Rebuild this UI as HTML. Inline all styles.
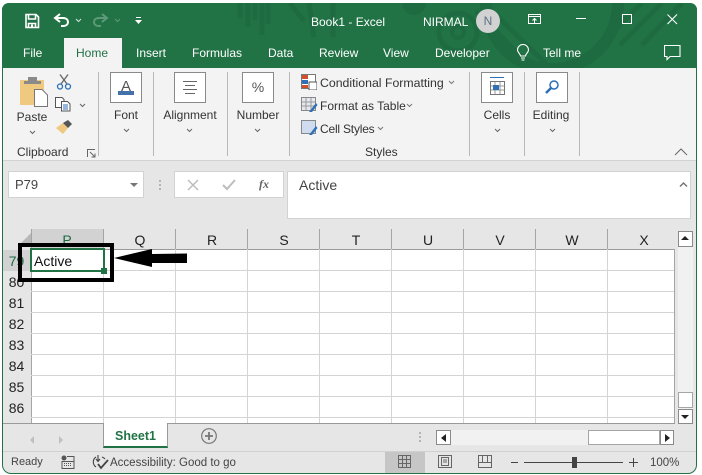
<!DOCTYPE html>
<html><head><meta charset="utf-8"><style>
*{box-sizing:border-box}
html,body{margin:0;padding:0;background:#fff}
body{width:702px;height:475px;position:relative;overflow:hidden;font-family:"Liberation Sans",sans-serif;font-size:12px;color:#333}
.a{position:absolute}
.t{position:absolute;white-space:nowrap;line-height:14px}
.w{color:#fff}
.c{text-align:center}
.box{position:absolute;background:#fff;border:1px solid #8a8a8a;width:32px;height:31px;top:72px}
.sep{position:absolute;top:72px;height:84px;width:1px;background:#b8b8b8}
.hl{position:absolute;left:31px;width:643px;height:1px;background:#d4d4d4}
.vl{position:absolute;top:249px;width:1px;height:174px;background:#d4d4d4}
.ch{position:absolute;top:233px;width:72px;text-align:center;font-size:14px;line-height:15px;color:#222}
.cs{position:absolute;top:229px;width:1px;height:20px;background:#a5a5a5}
.rh{position:absolute;left:3px;width:27px;text-align:center;font-size:14px;line-height:16px;color:#222}
.car{position:absolute}
</style></head><body>

<!-- window -->
<div class="a" style="left:2px;top:3px;width:695px;height:471px;background:#e6e6e6;border:1px solid #217346;border-top:0;border-radius:7px 7px 9px 9px;overflow:hidden"></div>
<div class="a" style="left:2px;top:3px;width:695px;height:65px;background:#217346;border-radius:7px 7px 0 0;overflow:hidden">
<svg width="695" height="65" style="position:absolute;left:0;top:0" fill="none">
<g stroke-width="5" stroke="#1e6b41">
<path d="M238 0V15M246 0V24M253 0V17M260 0V32M266 0V21"/>
<path d="M288 0L302 18M307 0L312 34M331 0V34"/>
<circle cx="456" cy="29" r="19" stroke-width="5"/>
<circle cx="456" cy="29" r="6" stroke-width="4"/>
<path d="M474 8L530 65M486 4L548 65"/>
<circle cx="550" cy="0" r="66" stroke-width="12"/>
<path d="M640 0L600 40M660 0L618 42M680 0L640 42"/>
</g>
<circle cx="412" cy="0" r="12" fill="#1e6b41" stroke="none"/>
</svg>
</div>

<!-- QAT -->
<svg class="a" style="left:24px;top:13px" width="16" height="16" viewBox="0 0 16 16" fill="none" stroke="#fff" stroke-width="1.6"><path d="M2 1.5H12L14.5 4V14.5H2Z"/><path d="M4.5 1.5V6H11.5V1.5M4.5 14.5V10.5H11.5V14.5"/><rect x="7" y="11.5" width="2" height="3" fill="#fff" stroke="none"/></svg>
<svg class="a" style="left:53px;top:13px" width="17" height="15" viewBox="0 0 17 15" fill="none" stroke="#fff" stroke-width="2"><path d="M7 1L2 5L7 9"/><path d="M2.5 5H10C13.5 5 15 7 15 9S13.5 13 10 13H8"/></svg>
<svg class="a" style="left:75px;top:18px" width="7" height="5" fill="none" stroke="#d5e6dc"><path d="M1 1L3.5 3.5L6 1"/></svg>
<svg class="a" style="left:92px;top:13px" width="17" height="15" viewBox="0 0 17 15" fill="none" stroke="#5c9a79" stroke-width="2"><path d="M10 1L15 5L10 9"/><path d="M14.5 5H7C3.5 5 2 7 2 9S3.5 13 7 13H9"/></svg>
<svg class="a" style="left:114px;top:18px" width="7" height="5" fill="none" stroke="#5c9a79"><path d="M1 1L3.5 3.5L6 1"/></svg>
<svg class="a" style="left:135px;top:17px" width="8" height="8" fill="#fff"><rect x="1" y="0" width="5" height="1"/><path d="M0 3H7L3.5 7Z"/></svg>

<div class="t w" style="left:311px;top:15px;font-size:12px">Book1&nbsp;-&nbsp;Excel</div>
<div class="t w" style="left:423px;top:15px;font-size:12px">NIRMAL</div>
<div class="a c" style="left:476px;top:9px;width:24px;height:24px;border-radius:50%;background:#d2d2d2;color:#5b6f86;font-size:12px;line-height:24px">N</div>
<svg class="a" style="left:528px;top:14px" width="14" height="11" fill="none" stroke="#fff"><rect x=".5" y=".5" width="12" height="9"/><path d="M0 2.5H13M6.5 9V4.5M4.5 6.5L6.5 4.5L8.5 6.5"/></svg>
<div class="a" style="left:576px;top:18px;width:10px;height:1px;background:#fff"></div>
<div class="a" style="left:622px;top:14px;width:10px;height:10px;border:1px solid #fff"></div>
<svg class="a" style="left:667px;top:14px" width="11" height="11" stroke="#fff" stroke-width="1.1"><path d="M.5 .5L10 10M10 .5L.5 10"/></svg>

<!-- tabs -->
<div class="a" style="left:64px;top:38px;width:58px;height:31px;background:#f3f3f3"></div>
<div class="t w" style="left:23px;top:46px">File</div>
<div class="t" style="left:76px;top:46px;color:#217346">Home</div>
<div class="t w" style="left:136px;top:46px">Insert</div>
<div class="t w" style="left:192px;top:46px">Formulas</div>
<div class="t w" style="left:268px;top:46px">Data</div>
<div class="t w" style="left:319px;top:46px">Review</div>
<div class="t w" style="left:383px;top:46px">View</div>
<div class="t w" style="left:435px;top:46px">Developer</div>
<svg class="a" style="left:516px;top:44px" width="14" height="18" fill="none" stroke="#fff" stroke-width="1.1"><path d="M4.5 12C4 9 1.500 8.500 1.500 6A5.500 5.500 0 0 1 12.500 6C12.500 8.500 10 9 9.500 12ZM5 14H9M5.500 16H8.500"/></svg>
<div class="t w" style="left:543px;top:46px">Tell me</div>
<svg class="a" style="left:664px;top:45px" width="17" height="16" fill="none" stroke="#fff" stroke-width="1.1"><path d="M.5 .5H16V11.500H6L3 14.500V11.500H.5Z"/></svg>

<!-- ribbon -->
<div class="a" style="left:3px;top:68px;width:693px;height:93px;background:#f3f3f3;border-bottom:1px solid #d2d2d2"></div>
<div class="sep" style="left:98px"></div><div class="sep" style="left:153px"></div><div class="sep" style="left:227px"></div><div class="sep" style="left:289px"></div><div class="sep" style="left:469px"></div><div class="sep" style="left:524px"></div><div class="sep" style="left:579px"></div>

<!-- paste -->
<svg class="a" style="left:19px;top:75px" width="30" height="32"><rect x="1" y="5" width="24" height="25" fill="#eec97f"/><rect x="9" y="2" width="9" height="6" fill="#8a8a8a"/><rect x="5" y="6" width="17" height="3" fill="#8a8a8a"/><path d="M15.500 14.500H23L28.500 20V31.500H15.500Z" fill="#fff" stroke="#777"/></svg>
<div class="t c" style="left:12px;top:110px;width:40px">Paste</div>
<svg class="a" style="left:29px;top:130px" width="7" height="5" fill="none" stroke="#666"><path d="M1 1L3.500 3.500L6 1"/></svg>
<svg class="a" style="left:56px;top:74px" width="16" height="16" fill="none"><path d="M4 .5L11 10M12 .5L5 10" stroke="#666" stroke-width="1.300"/><circle cx="4" cy="12.500" r="2.500" stroke="#2e6fb5" stroke-width="1.300"/><circle cx="12" cy="12.500" r="2.500" stroke="#2e6fb5" stroke-width="1.300"/></svg>
<svg class="a" style="left:55px;top:97px" width="17" height="15" fill="#fff" stroke="#555"><path d="M.5 .5H7L9 2.500V10.500H.5Z"/><path d="M6.500 4.500H12.500L15 7V14H6.500Z"/><path d="M8 8H13M8 10H13M8 12H13" stroke="#2e6fb5"/></svg>
<svg class="a" style="left:79px;top:103px" width="7" height="5" fill="none" stroke="#666"><path d="M1 1L3.500 3.500L6 1"/></svg>
<svg class="a" style="left:56px;top:119px" width="17" height="16"><path d="M0 9L7 4L12 9L7 15Z" fill="#eec97f"/><path d="M7 4L12 9L16 5L12 1Z" fill="#555"/></svg>
<div class="t" style="left:17px;top:145px">Clipboard</div>
<svg class="a" style="left:87px;top:149px" width="9" height="9" fill="none" stroke="#666"><path d="M.5 8V.5H8M3 3L8 8M8 4.500V8H4.500"/></svg>

<!-- font -->
<div class="box" style="left:110px"><svg width="30" height="29"><text x="15" y="18" text-anchor="middle" font-family="Liberation Sans" font-size="15" fill="#555">A</text><rect x="7" y="18" width="16" height="4" fill="#4472a8"/></svg></div>
<div class="t c" style="left:106px;top:108px;width:40px">Font</div>
<svg class="a car" style="left:123px;top:128px" width="7" height="5" fill="none" stroke="#666"><path d="M1 1L3.500 3.500L6 1"/></svg>
<!-- alignment -->
<div class="box" style="left:174px"><svg width="30" height="29" stroke="#666"><path d="M8 9.500H22M10 13.500H20M8 17.500H22M10 21.500H20" transform="translate(0,-1)"/></svg></div>
<div class="t c" style="left:160px;top:108px;width:60px">Alignment</div>
<svg class="a car" style="left:186px;top:128px" width="7" height="5" fill="none" stroke="#666"><path d="M1 1L3.500 3.500L6 1"/></svg>
<!-- number -->
<div class="box" style="left:242px"><div class="c" style="font-size:14px;line-height:29px;color:#555">%</div></div>
<div class="t c" style="left:228px;top:108px;width:60px">Number</div>
<svg class="a car" style="left:254px;top:128px" width="7" height="5" fill="none" stroke="#666"><path d="M1 1L3.500 3.500L6 1"/></svg>

<!-- styles -->
<svg class="a" style="left:301px;top:74px" width="16" height="16"><rect x=".5" y=".5" width="14" height="14" fill="#fff" stroke="#777"/><rect x="1" y="1" width="6" height="4" fill="#d0502e"/><rect x="1" y="6" width="6" height="4" fill="#2e6fb5"/><rect x="1" y="11" width="6" height="3" fill="#d0502e"/><rect x="8" y="8" width="8" height="8" fill="#fff" stroke="#555"/></svg>
<svg class="a" style="left:301px;top:97px" width="17" height="16"><rect x=".5" y=".5" width="14" height="13" fill="#e5e8ee" stroke="#888"/><path d="M5 1V13M10 1V13M1 5H14M1 9H14" stroke="#999"/><path d="M8 15L15 6L16.500 8L11 15Z" fill="#2e6fb5"/></svg>
<svg class="a" style="left:301px;top:120px" width="17" height="16"><rect x=".5" y=".5" width="14" height="13" fill="#cfdcef" stroke="#888"/><path d="M8 15L15 6L16.500 8L11 15Z" fill="#2e6fb5"/></svg>
<div class="t" style="left:320px;top:76px;font-size:12.3px">Conditional Formatting</div>
<svg class="a" style="left:448px;top:80px" width="7" height="5" fill="none" stroke="#777"><path d="M1 1L3.500 3.500L6 1"/></svg>
<div class="t" style="left:320px;top:99px;font-size:12px">Format as Table</div>
<svg class="a" style="left:406px;top:103px" width="7" height="5" fill="none" stroke="#777"><path d="M1 1L3.500 3.500L6 1"/></svg>
<div class="t" style="left:320px;top:122px;font-size:12px;letter-spacing:-.2px">Cell Styles</div>
<svg class="a" style="left:377px;top:126px" width="7" height="5" fill="none" stroke="#777"><path d="M1 1L3.500 3.500L6 1"/></svg>
<div class="t" style="left:365px;top:145px">Styles</div>

<!-- cells / editing -->
<div class="box" style="left:481px"><svg width="30" height="29" fill="none"><path d="M8 4.500H22" stroke="#2e6fb5"/><rect x="8.500" y="8.500" width="14" height="13" stroke="#777"/><path d="M13 9V21M18 9V21M9 13H22M9 17H22" stroke="#999"/><rect x="11" y="12" width="6" height="5" fill="#2e6fb5"/></svg></div>
<div class="t c" style="left:477px;top:108px;width:40px">Cells</div>
<svg class="a car" style="left:494px;top:128px" width="7" height="5" fill="none" stroke="#666"><path d="M1 1L3.500 3.500L6 1"/></svg>
<div class="box" style="left:536px"><svg width="30" height="29" fill="none" stroke="#2e6fb5"><circle cx="17" cy="12" r="4" stroke-width="1.500"/><path d="M14 15L9 20" stroke-width="2.500"/></svg></div>
<div class="t c" style="left:525px;top:108px;width:52px">Editing</div>
<svg class="a car" style="left:549px;top:128px" width="7" height="5" fill="none" stroke="#666"><path d="M1 1L3.500 3.500L6 1"/></svg>
<svg class="a" style="left:674px;top:147px" width="14" height="9" fill="none" stroke="#666"><path d="M1 8L7 2L13 8"/></svg>

<!-- formula bar -->
<div class="a" style="left:8px;top:171px;width:136px;height:27px;background:#fff;border:1px solid #d2d2d2"></div>
<div class="t" style="left:15px;top:178px;font-size:13px;color:#444">P79</div>
<div class="a" style="left:130px;top:183px;border:4px solid transparent;border-top:4px solid #777;border-bottom:0"></div>
<div class="a" style="left:159px;top:180px;width:2px;height:2px;background:#b5b5b5;box-shadow:0 4px #b5b5b5,0 8px #b5b5b5"></div>
<div class="a" style="left:174px;top:171px;width:110px;height:27px;background:#fff;border:1px solid #d2d2d2"></div>
<svg class="a" style="left:187px;top:179px" width="12" height="12" stroke="#bdbdbd" stroke-width="1.500"><path d="M1 1L11 11M11 1L1 11"/></svg>
<svg class="a" style="left:222px;top:179px" width="14" height="12" fill="none" stroke="#bdbdbd" stroke-width="2"><path d="M1 6L5 10L13 1"/></svg>
<div class="t" style="left:259px;top:177px;font-family:'Liberation Serif',serif;font-style:italic;font-weight:bold;font-size:12px;color:#666">fx</div>
<div class="a" style="left:287px;top:171px;width:404px;height:48px;background:#fff;border:1px solid #d2d2d2"></div>
<div class="t" style="left:299px;top:178px;font-size:14px;color:#444">Active</div>
<svg class="a" style="left:679px;top:181px" width="9" height="7" fill="none" stroke="#777" stroke-width="1.500"><path d="M1 5.500L4.500 2L8 5.500"/></svg>

<!-- grid -->
<div class="a" style="left:31px;top:249px;width:643px;height:174px;background:#fff"></div>
<div class="a" style="left:3px;top:229px;width:28px;height:194px;background:#e6e6e6"></div>
<div class="a" style="left:31px;top:229px;width:72px;height:20px;background:#d2d2d2"></div>
<div class="a" style="left:3px;top:250px;width:28px;height:21px;background:#d2d2d2"></div>
<div class="a" style="left:18px;top:233px;border-style:solid;border-width:0 0 13px 13px;border-color:transparent transparent #b8b8b8 transparent"></div>
<div class="a" style="left:31px;top:249px;width:643px;height:1px;background:#9a9a9a"></div>
<div class="a" style="left:31px;top:229px;width:1px;height:194px;background:#a5a5a5"></div>
<div class="a" style="left:674px;top:249px;width:1px;height:174px;background:#a5a5a5"></div>
<div class="cs" style="left:103px"></div><div class="cs" style="left:175px"></div><div class="cs" style="left:247px"></div><div class="cs" style="left:319px"></div><div class="cs" style="left:391px"></div><div class="cs" style="left:463px"></div><div class="cs" style="left:535px"></div><div class="cs" style="left:607px"></div>
<div class="vl" style="left:103px"></div><div class="vl" style="left:175px"></div><div class="vl" style="left:247px"></div><div class="vl" style="left:319px"></div><div class="vl" style="left:391px"></div><div class="vl" style="left:463px"></div><div class="vl" style="left:535px"></div><div class="vl" style="left:607px"></div>
<div class="hl" style="top:270px"></div><div class="hl" style="top:291px"></div><div class="hl" style="top:312px"></div><div class="hl" style="top:333px"></div><div class="hl" style="top:354px"></div><div class="hl" style="top:375px"></div><div class="hl" style="top:396px"></div><div class="hl" style="top:417px"></div>
<div class="ch" style="left:31px;color:#1c6b41">P</div><div class="ch" style="left:104px">Q</div><div class="ch" style="left:176px">R</div><div class="ch" style="left:248px">S</div><div class="ch" style="left:320px">T</div><div class="ch" style="left:392px">U</div><div class="ch" style="left:464px">V</div><div class="ch" style="left:536px">W</div><div class="ch" style="left:608px">X</div>
<div class="rh" style="top:253px;color:#1c6b41">79</div><div class="rh" style="top:274px">80</div><div class="rh" style="top:295px">81</div><div class="rh" style="top:316px">82</div><div class="rh" style="top:337px">83</div><div class="rh" style="top:358px">84</div><div class="rh" style="top:379px">85</div><div class="rh" style="top:400px">86</div>

<!-- selection -->
<div class="a" style="left:30px;top:248px;width:75px;height:24px;border:2px solid #217346"></div>
<div class="a" style="left:101px;top:268px;width:6px;height:6px;background:#217346"></div>
<div class="t" style="left:34px;top:254px;font-size:14px;color:#111">Active</div>
<div class="a" style="left:18px;top:243px;width:96px;height:39px;border:4px solid #000"></div>
<svg class="a" style="left:112px;top:248px" width="78" height="22"><path d="M2 10L40 1L40 6L75 5.500L75 15L40 15L40 19Z" fill="#000"/></svg>

<!-- v-scroll -->
<div class="a" style="left:678px;top:231px;width:15px;height:192px;background:#f1f1f1"></div>
<div class="a" style="left:678px;top:231px;width:15px;height:16px;background:#fff;border:1px solid #8a8a8a"></div>
<div class="a" style="left:681px;top:236px;border:4px solid transparent;border-bottom:4px solid #222;border-top:0"></div>
<div class="a" style="left:678px;top:392px;width:15px;height:16px;background:#fff;border:1px solid #a5a5a5"></div>
<div class="a" style="left:678px;top:409px;width:15px;height:15px;background:#fff;border:1px solid #8a8a8a"></div>
<div class="a" style="left:681px;top:415px;border:4px solid transparent;border-top:4px solid #222;border-bottom:0"></div>

<!-- sheet bar -->
<div class="a" style="left:3px;top:423px;width:672px;height:1px;background:#9a9a9a"></div>
<div class="a" style="left:30px;top:436px;border:4px solid transparent;border-right:4px solid #c0c0c0;border-left:0"></div>
<div class="a" style="left:59px;top:436px;border:4px solid transparent;border-left:4px solid #c0c0c0;border-right:0"></div>
<div class="a" style="left:103px;top:423px;width:65px;height:25px;background:#fff;border:1px solid #9a9a9a;border-top:0;border-bottom:2px solid #217346"></div>
<div class="a c" style="left:103px;top:429px;width:65px;font-weight:bold;font-size:12.5px;line-height:14px;color:#217346">Sheet1</div>
<svg class="a" style="left:201px;top:428px" width="16" height="16" fill="none" stroke="#777" stroke-width="1.2"><circle cx="8" cy="8" r="7.3"/><path d="M4 8H12M8 4V12" stroke-width="1.800"/></svg>
<div class="a" style="left:419px;top:432px;width:2px;height:2px;background:#b5b5b5;box-shadow:0 4px #b5b5b5,0 8px #b5b5b5"></div>
<div class="a" style="left:436px;top:430px;width:238px;height:15px;background:#f1f1f1"></div>
<div class="a" style="left:436px;top:430px;width:15px;height:15px;background:#fff;border:1px solid #8a8a8a"></div>
<div class="a" style="left:441px;top:434px;border:4px solid transparent;border-right:5px solid #222;border-left:0"></div>
<div class="a" style="left:588px;top:430px;width:72px;height:15px;background:#fff;border:1px solid #a5a5a5"></div>
<div class="a" style="left:660px;top:430px;width:14px;height:15px;background:#fff;border:1px solid #8a8a8a"></div>
<div class="a" style="left:665px;top:434px;border:4px solid transparent;border-left:5px solid #222;border-right:0"></div>

<!-- status -->
<div class="a" style="left:3px;top:451px;width:693px;height:1px;background:#d0d0d0"></div>
<div class="t" style="left:11px;top:455px;font-size:11px;color:#444">Ready</div>
<svg class="a" style="left:61px;top:455px" width="14" height="14"><circle cx="3" cy="3" r="2.500" fill="#555"/><path d="M6 1.500H13V13.500H1V6.500H13" fill="none" stroke="#555"/><path d="M3 8.500H11M3 10.500H11" stroke="#555" stroke-dasharray="1 1"/></svg>
<svg class="a" style="left:91px;top:454px" width="18" height="16" fill="none" stroke="#444" stroke-width="1.1"><path d="M5 3A6 6 0 0 0 5 13"/><path d="M7 1V7M5 5L7 7.500L9 5"/><path d="M11 3A6 6 0 0 1 14 5"/><path d="M7 10L10 14L17 6" stroke-width="1.800"/></svg>
<div class="t" style="left:110px;top:456px;font-size:11.5px;color:#444">Accessibility: Good to go</div>
<div class="a" style="left:385px;top:452px;width:40px;height:21px;background:#c6c6c6"></div>
<svg class="a" style="left:398px;top:455px" width="13" height="13" fill="none" stroke="#666"><path d="M.5 .5H12.500V12.500H.5ZM4.500 .5V12.500M8.500 .5V12.500M.5 4.500H12.500M.5 8.500H12.500"/></svg>
<svg class="a" style="left:438px;top:455px" width="14" height="14" fill="none" stroke="#666"><rect x=".5" y=".5" width="13" height="12"/><rect x="3.500" y="2.500" width="7" height="8"/><path d="M5 5H9M5 7H9"/></svg>
<svg class="a" style="left:478px;top:455px" width="14" height="13" fill="none" stroke="#666"><path d="M.5 .5H13.500V12.500H.5ZM.5 7.500H13.500"/><path d="M4.500 .5V7.500M9.500 .5V7.500"/></svg>
<div class="a" style="left:511px;top:462px;width:7px;height:1px;background:#444"></div>
<div class="a" style="left:524px;top:462px;width:99px;height:1px;background:#444"></div>
<div class="a" style="left:572px;top:457px;width:5px;height:11px;background:#444"></div>
<div class="a" style="left:629px;top:462px;width:9px;height:1px;background:#444"></div>
<div class="a" style="left:633px;top:458px;width:1px;height:9px;background:#444"></div>
<div class="t" style="left:650px;top:456px;font-size:11.5px;color:#444">100%</div>

</body></html>
